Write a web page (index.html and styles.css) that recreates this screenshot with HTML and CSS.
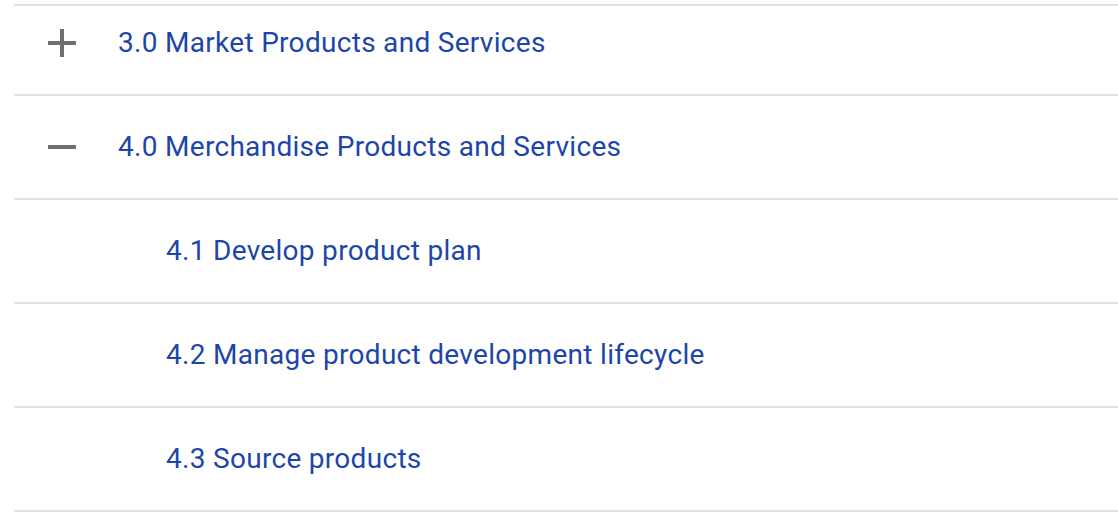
FILE: index.html
```html
<!DOCTYPE html>
<html>
<head>
<meta charset="utf-8">
<link rel="stylesheet" href="styles.css">
</head>
<body>
<div class="tree">
  <div class="top-rule"></div>
  <div class="row row--clipped">
    <span class="toggle">
      <svg width="28" height="28" viewBox="0 0 28 28"><rect x="0" y="12" width="28" height="4" fill="#707070"/><rect x="12" y="0" width="4" height="28" fill="#707070"/></svg>
    </span>
    <a class="label">3.0 Market Products and Services</a>
  </div>
  <div class="row">
    <span class="toggle">
      <svg width="28" height="28" viewBox="0 0 28 28"><rect x="0" y="12" width="28" height="4" fill="#707070"/></svg>
    </span>
    <a class="label">4.0 Merchandise Products and Services</a>
  </div>
  <div class="row row--child">
    <a class="label">4.1 Develop product plan</a>
  </div>
  <div class="row row--child">
    <a class="label">4.2 Manage product development lifecycle</a>
  </div>
  <div class="row row--child">
    <a class="label">4.3 Source products</a>
  </div>
</div>
</body>
</html>
```
FILE: styles.css
```css
html, body {
  margin: 0;
  padding: 0;
  background: #ffffff;
}
body {
  font-family: Roboto, "Noto Sans", sans-serif;
  overflow: hidden;
}
.tree {
  margin-left: 14px;
}
.top-rule {
  margin-top: 4px;
  height: 2px;
  background: #e2e2e2;
}
.row {
  display: flex;
  align-items: center;
  height: 102px;
  border-bottom: 2px solid #e2e2e2;
  padding-left: 34px;
}
.row--clipped {
  height: 74px;
  padding-bottom: 14px;
}
.row--child {
  padding-left: 152px;
}
.toggle {
  display: flex;
  width: 28px;
  height: 28px;
  margin-right: 42px;
}
.label {
  color: #1d46a8;
  font-size: 28px;
  letter-spacing: 0.3px;
  line-height: 34px;
  cursor: pointer;
}
```
